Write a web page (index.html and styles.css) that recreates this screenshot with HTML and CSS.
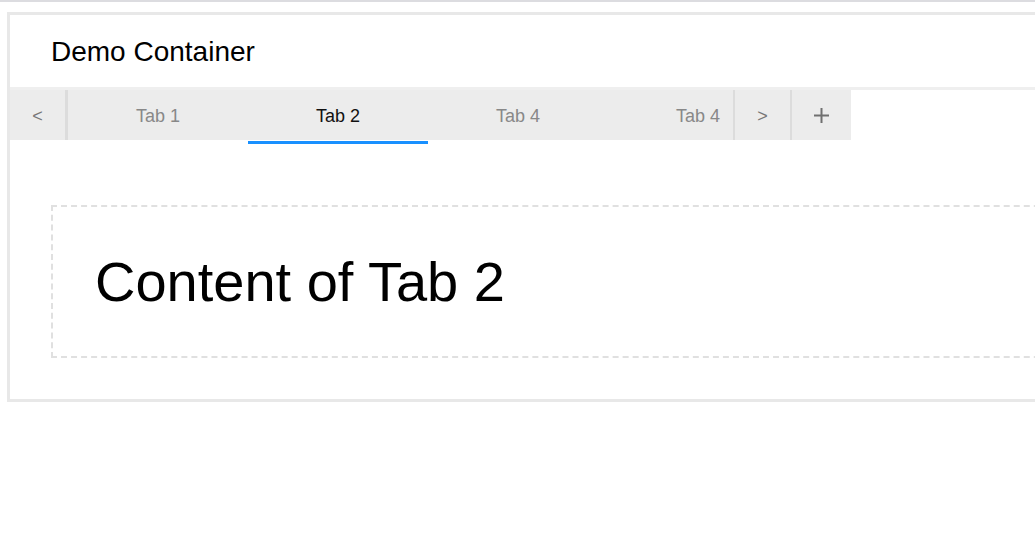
FILE: index.html
```html
<!DOCTYPE html>
<html lang="en">
<head>
<meta charset="utf-8">
<title>Demo Container</title>
<link rel="stylesheet" href="styles.css">
</head>
<body>
<div class="topbar"></div>
<div class="panel">
  <div class="panel-header">Demo Container</div>
  <div class="tabs-row">
    <div class="nav-btn prev">&lt;</div>
    <div class="tab-list">
      <div class="tab">Tab 1</div>
      <div class="tab active">Tab 2</div>
      <div class="tab">Tab 4</div>
      <div class="tab">Tab 4</div>
    </div>
    <div class="nav-btn next">&gt;</div>
    <div class="nav-btn add">
      <svg width="15" height="15" viewBox="0 0 15 15"><path d="M7.5 0V15M0 7.5H15" stroke="#707070" stroke-width="2" fill="none"/></svg>
    </div>
  </div>
  <div class="tab-panel">
    <div class="content-box">Content of Tab 2</div>
  </div>
</div>
</body>
</html>
```

FILE: styles.css
```css
html, body {
  margin: 0;
  padding: 0;
  background: #ffffff;
  overflow: hidden;
}

body {
  font-family: "Liberation Sans", Arial, sans-serif;
  color: #000;
}

.topbar {
  height: 2px;
  background: #dcdce0;
}

.panel {
  margin: 10px 0 0 7px;
  width: 1100px;
  border: 3px solid #e8e8e8;
}

.panel-header {
  box-sizing: border-box;
  height: 75px;
  padding-left: 41px;
  padding-top: 2px;
  display: flex;
  align-items: center;
  font-size: 28px;
  border-bottom: 3px solid #efefef;
}

.tabs-row {
  display: flex;
  align-items: flex-start;
}

.nav-btn {
  box-sizing: border-box;
  height: 50px;
  padding-top: 3px;
  background: #ececec;
  color: #777;
  font-size: 18px;
  display: flex;
  align-items: center;
  justify-content: center;
  flex: 0 0 auto;
}

.prev {
  width: 58px;
  border-right: 3px solid #dcdcdc;
}

.next {
  width: 59px;
  border-left: 2px solid #dcdcdc;
  border-right: 2px solid #dcdcdc;
}

.add {
  width: 59px;
  padding-top: 0;
}

.tab-list {
  width: 665px;
  overflow: hidden;
  display: flex;
  flex: 0 0 auto;
}

.tab {
  box-sizing: border-box;
  flex: 0 0 180px;
  height: 54px;
  padding: 5px 0 4px;
  border-bottom: 3px solid transparent;
  background: linear-gradient(#ececec, #ececec) top left / 100% 50px no-repeat;
  color: #888;
  font-size: 18px;
  display: flex;
  align-items: center;
  justify-content: center;
}

.tab.active {
  color: #111;
  border-bottom-color: #1890ff;
}

.tab-panel {
  padding: 61px 0 41px 41px;
}

.content-box {
  border: 2px dashed #e0e0e0;
  padding: 42px 42px;
  font-size: 56px;
  line-height: normal;
}
```
